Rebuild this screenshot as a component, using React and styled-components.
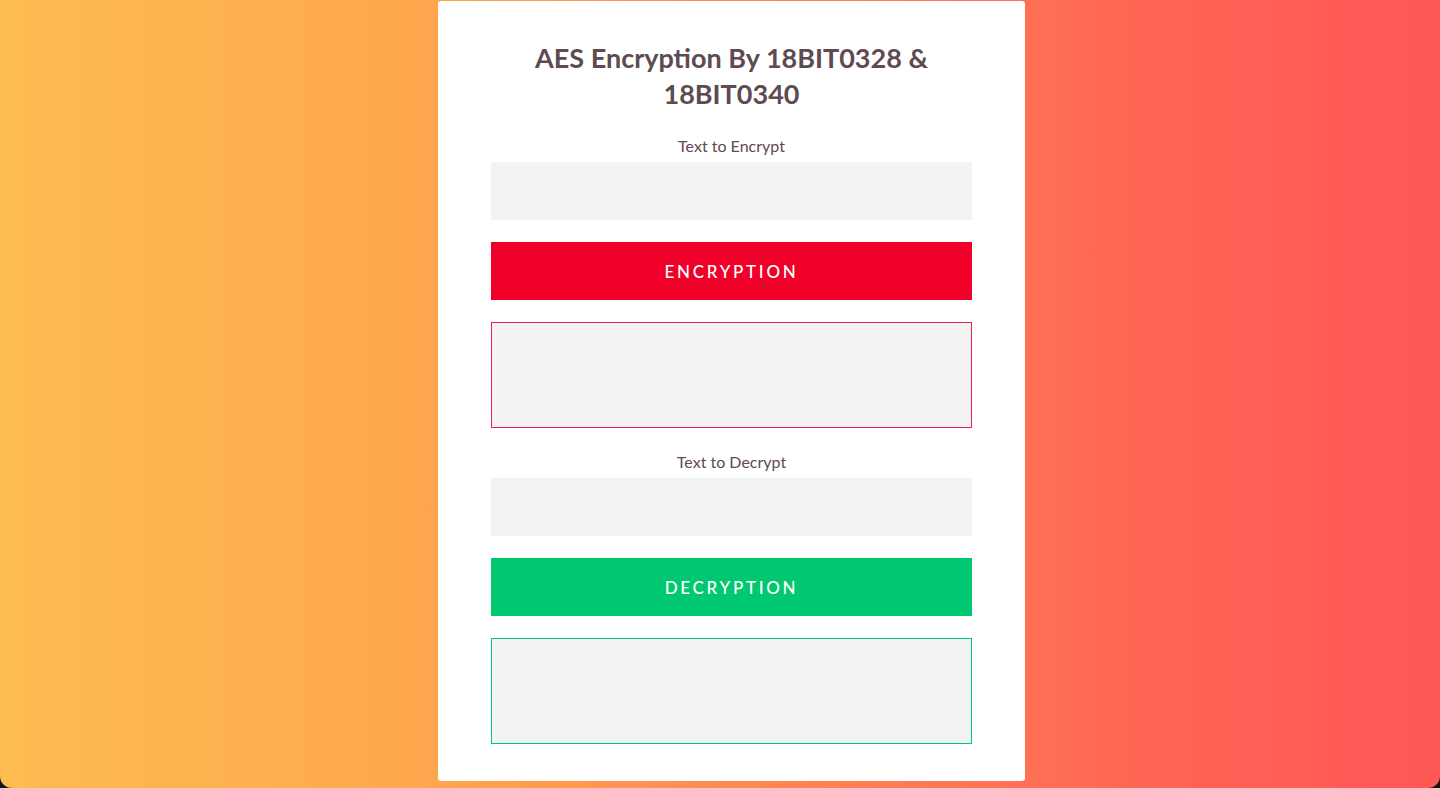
import React, { useState } from 'react'
import styled, { createGlobalStyle } from 'styled-components'

const GlobalStyle = createGlobalStyle`
  html, body {
    margin: 0;
    padding: 0;
    background: #151515;
  }
  * {
    box-sizing: border-box;
  }
`

const Page = styled.div`
  height: 788px;
  padding: 1px 0 0 23px;
  display: flex;
  justify-content: center;
  align-items: flex-start;
  background: linear-gradient(90deg, #fdbc52 0%, #fea64d 30%, #ff8453 55%, #ff6555 80%, #ff5656 100%);
  border-radius: 0 0 12px 12px;
  font-family: Lato, "Open Sans", sans-serif;
`

const Card = styled.div`
  width: 587px;
  background: #fff;
  border-radius: 3px;
  padding: 39px 53px 37px;
  display: flex;
  flex-direction: column;
  gap: 22px;
`

const Title = styled.h1`
  margin: 0;
  text-align: center;
  font-size: 27px;
  line-height: 36px;
  font-weight: 700;
  color: #5d4b51;
`

const Field = styled.div`
  display: flex;
  flex-direction: column;
`

const Label = styled.label`
  text-align: center;
  font-size: 16px;
  line-height: 24px;
  color: #5d4b51;
  margin-bottom: 4px;
`

const Input = styled.input`
  height: 58px;
  border: none;
  outline: none;
  background: #f3f3f3;
  padding: 0 16px;
  font: inherit;
`

const Button = styled.button`
  height: 58px;
  border: none;
  cursor: pointer;
  background: ${p => p.$color};
  color: #fff;
  font-family: inherit;
  font-size: 17px;
  font-weight: 500;
  letter-spacing: 2.7px;
  text-transform: uppercase;
`

const Output = styled.textarea`
  appearance: none;
  display: block;
  height: 106px;
  resize: none;
  border: none;
  box-shadow: inset 0 0 0 1px ${p => p.$color};
  border-radius: 0;
  background: #f3f3f3;
  outline: none;
  font: inherit;
  padding: 10px;
`

export default function App() {
  const [plain, setPlain] = useState('')
  const [cipher, setCipher] = useState('')

  return (
    <>
      <GlobalStyle />
      <Page>
        <Card>
          <Title>AES Encryption By 18BIT0328 &amp; 18BIT0340</Title>
          <Field>
            <Label>Text to Encrypt</Label>
            <Input value={plain} onChange={e => setPlain(e.target.value)} />
          </Field>
          <Button $color="#ef0029">Encryption</Button>
          <Output $color="#ef1d4c" readOnly />
          <Field>
            <Label>Text to Decrypt</Label>
            <Input value={cipher} onChange={e => setCipher(e.target.value)} />
          </Field>
          <Button $color="#00c870">Decryption</Button>
          <Output $color="#00c870" readOnly />
        </Card>
      </Page>
    </>
  )
}
